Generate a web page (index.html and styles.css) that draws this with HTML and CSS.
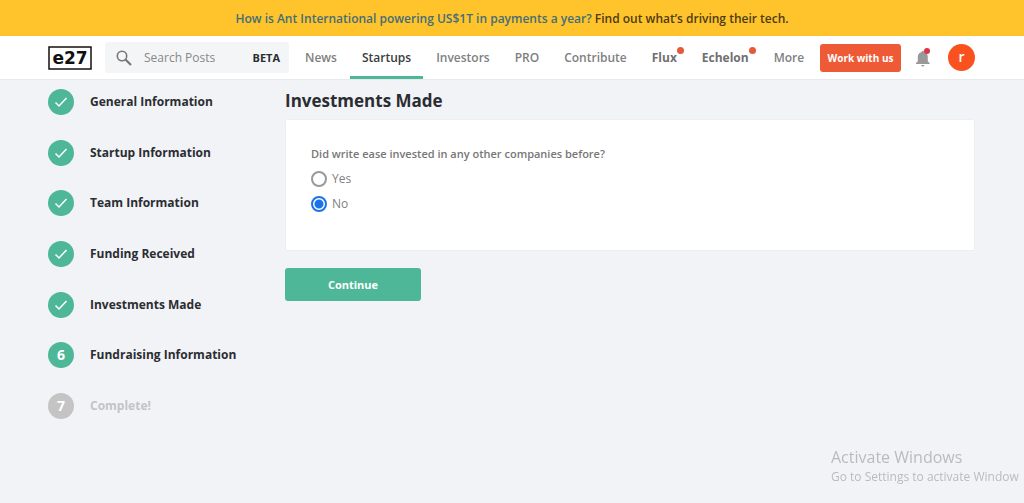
FILE: index.html
```html
<!DOCTYPE html>
<html lang="en">
<head>
    <meta charset="UTF-8">
    <meta name="viewport" content="width=device-width, initial-scale=1.0">
    <title>Investments Made | e27</title>
    <link rel="stylesheet" href="styles.css">
</head>
<body>
    <div class="banner"><a href="#">How is Ant International powering US$1T in payments a year?</a> Find out what’s driving their tech.</div>

    <header class="header">
        <a class="logo" href="#" aria-label="e27">
            <svg width="44" height="24" viewBox="0 0 44 24">
                <rect x="1" y="1" width="42" height="22" fill="#fff" stroke="#111" stroke-width="1.5"/>
                <text x="22" y="18" text-anchor="middle">e27</text>
            </svg>
        </a>
        <form class="search">
            <svg width="16" height="16" viewBox="0 0 16 16" fill="none" stroke="#777">
                <circle cx="6" cy="6" r="4.7" stroke-width="1.6"/>
                <path d="M9.5 9.5L15 15" stroke-width="2.2"/>
            </svg>
            <input type="text" placeholder="Search Posts" aria-label="Search Posts">
            <span class="beta">BETA</span>
        </form>
        <nav class="nav">
            <a href="#">News</a>
            <a href="#" class="active">Startups</a>
            <a href="#">Investors</a>
            <a href="#">PRO</a>
            <a href="#">Contribute</a>
            <a href="#" class="hot">Flux</a>
            <a href="#" class="hot">Echelon</a>
            <a href="#">More</a>
        </nav>
        <div class="user">
            <button type="button" class="btn work">Work with us</button>
            <button type="button" class="bell" aria-label="Notifications">
                <svg width="16" height="20" viewBox="0 0 16 20">
                    <path fill="#999" d="M6.600 3.900a1.200 1.200 0 0 1 2.400 0c2.500.6 3.800 2.500 3.800 5.100v4.200l1.800 1.900v1H1v-1l1.800-1.900V9c0-2.600 1.300-4.500 3.800-5.100zM6.200 17h3.200a1.600 1.600 0 0 1-3.200 0z"/>
                    <circle cx="12" cy="3" r="3" fill="#dc3545"/>
                </svg>
            </button>
            <a href="#" class="avatar">r</a>
        </div>
    </header>

    <main class="main">
        <ol class="steps">
            <li><span class="num"><svg width="14" height="12" viewBox="0 0 14 12"><path d="M1.500 6.500L5 10L12.500 2"/></svg></span>General Information</li>
            <li><span class="num"><svg width="14" height="12" viewBox="0 0 14 12"><path d="M1.500 6.500L5 10L12.500 2"/></svg></span>Startup Information</li>
            <li><span class="num"><svg width="14" height="12" viewBox="0 0 14 12"><path d="M1.500 6.500L5 10L12.500 2"/></svg></span>Team Information</li>
            <li><span class="num"><svg width="14" height="12" viewBox="0 0 14 12"><path d="M1.500 6.500L5 10L12.500 2"/></svg></span>Funding Received</li>
            <li><span class="num"><svg width="14" height="12" viewBox="0 0 14 12"><path d="M1.500 6.500L5 10L12.500 2"/></svg></span>Investments Made</li>
            <li><span class="num">6</span>Fundraising Information</li>
            <li class="disabled"><span class="num">7</span>Complete!</li>
        </ol>
        <form class="content">
            <h1>Investments Made</h1>
            <fieldset class="card">
                <legend>Did write ease invested in any other companies before?</legend>
                <label><input type="radio" name="invested" value="yes">Yes</label>
                <label><input type="radio" name="invested" value="no" checked>No</label>
            </fieldset>
            <button type="submit" class="btn continue">Continue</button>
        </form>
    </main>

    <div class="watermark">
        <p class="watermark-title">Activate Windows</p>
        <p>Go to Settings to activate Window</p>
    </div>
</body>
</html>
```

FILE: styles.css
```css
*{
    margin: 0;
    padding: 0;
    box-sizing: border-box;
}
body{
    background-color: #f2f3f7;
    color: #2a2d31;
    font-family: "Open Sans", "Noto Sans", sans-serif;
    font-size: 12px;
    line-height: 18px;
}
a{
    text-decoration: none;
    color: inherit;
}
ol{
    list-style: none;
}
input, button{
    font-family: inherit;
}
button{
    border: 0;
    cursor: pointer;
}
.banner{
    padding: 10px 0 8px;
    background-color: #ffc32b;
    color: #4d3b14;
    font-weight: 600;
    text-align: center;
}
.banner a{
    color: #446f78;
}
.header{
    display: flex;
    align-items: center;
    height: 44px;
    padding: 0 49px 0 48px;
    background-color: #fff;
    border-bottom: 1px solid #e8e9ed;
}
.logo{
    display: flex;
}
.logo text{
    font-family: "DejaVu Sans", sans-serif;
    font-size: 17px;
    font-weight: 700;
    fill: #111;
}
.search{
    display: flex;
    align-items: center;
    width: 184px;
    height: 31px;
    margin-left: 13px;
    padding: 0 9px 0 11px;
    border-radius: 3px;
    background-color: #f4f5f7;
}
.search input{
    flex: 1;
    min-width: 0;
    margin-left: 12px;
    border: 0;
    outline: 0;
    background: none;
    font-size: 12px;
}
.search input::placeholder{
    color: #888;
}
.beta{
    font-size: 11px;
    font-weight: 700;
}
.nav{
    display: flex;
    gap: 1px;
    align-self: stretch;
    margin-left: 4px;
}
.nav a{
    padding: 13px 12px 0;
    color: #808080;
    font-weight: 600;
}
.nav .active{
    color: #3a3d40;
    border-bottom: 3px solid #4db797;
}
.nav .hot{
    position: relative;
    color: #707070;
    font-weight: 700;
}
.nav .hot::after{
    content: "";
    position: absolute;
    top: 11px;
    right: 5px;
    width: 7px;
    height: 7px;
    border-radius: 50%;
    background-color: #e45a3b;
}
.user{
    display: flex;
    align-items: center;
    margin-left: auto;
}
.btn{
    border-radius: 3px;
    color: #fff;
    font-weight: 700;
}
.work{
    width: 81px;
    height: 28px;
    background-color: #ee5a36;
    font-size: 10px;
}
.bell{
    display: flex;
    margin: 0 17px 0 14px;
    background: none;
}
.avatar{
    width: 27px;
    height: 27px;
    border-radius: 50%;
    background-color: #f9521e;
    color: #fff;
    font-size: 14px;
    font-weight: 600;
    line-height: 26px;
    text-align: center;
}
.main{
    display: flex;
    padding: 9px 49px 0 48px;
}
.steps{
    display: flex;
    flex-direction: column;
    justify-content: space-between;
    width: 237px;
    height: 330px;
}
.steps li{
    display: flex;
    align-items: center;
    gap: 16px;
    font-weight: 700;
}
.num{
    display: flex;
    align-items: center;
    justify-content: center;
    width: 26px;
    height: 26px;
    border-radius: 50%;
    background-color: #4db797;
    color: #fff;
    font-size: 14px;
}
.num path{
    fill: none;
    stroke: #fff;
    stroke-width: 1.5;
}
.disabled{
    color: #c4c4c6;
}
.disabled .num{
    background-color: #c4c4c4;
}
.content{
    flex: 1;
}
.content h1{
    font-size: 17px;
    line-height: 24px;
}
.card{
    margin: 6px 0 17px;
    padding: 25px 25px 37px;
    border: 1px solid #eceef1;
    border-radius: 2px;
    background-color: #fff;
}
.card legend{
    float: left;
    width: 100%;
    color: #777;
    font-size: 11px;
    font-weight: 600;
}
.card label{
    display: flex;
    clear: both;
    align-items: center;
    gap: 5px;
    padding-top: 7px;
    color: #808080;
}
.card input{
    width: 16px;
    height: 16px;
    border: 2px solid #999;
    border-radius: 50%;
    appearance: none;
}
.card input:checked{
    border-color: #1a73e8;
    background: radial-gradient(circle, #1a73e8 4px, #fff 5px);
}
.continue{
    display: block;
    width: 136px;
    height: 33px;
    background-color: #4db797;
    font-size: 11px;
}
.watermark{
    position: fixed;
    right: 2px;
    bottom: 17px;
    width: 191px;
    color: #b9bbc0;
    white-space: nowrap;
}
.watermark-title{
    font-size: 16px;
    line-height: 22px;
}
```
